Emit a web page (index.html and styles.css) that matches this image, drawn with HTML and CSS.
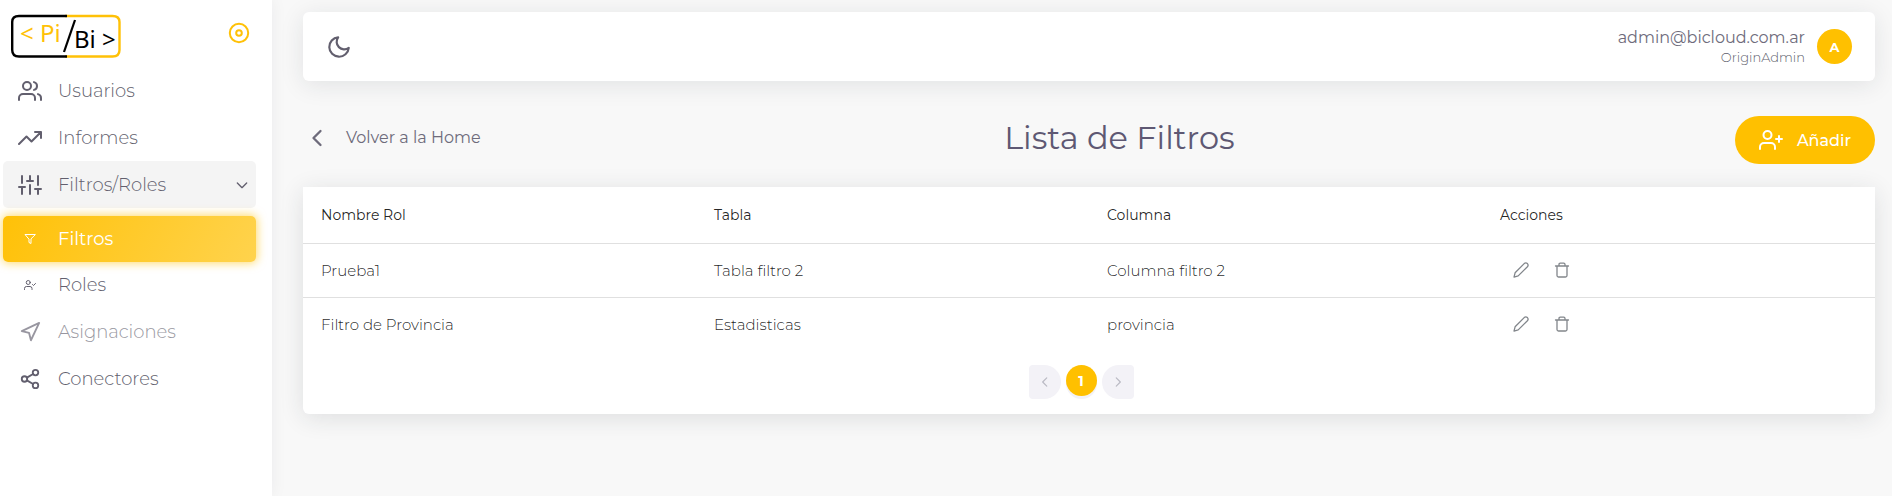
FILE: index.html
```html
<!DOCTYPE html>
<html lang="es">
<head>
<meta charset="utf-8">
<meta name="viewport" content="width=device-width, initial-scale=1">
<title>Lista de Filtros</title>
<link rel="stylesheet" href="styles.css">
</head>
<body>
<svg class="sprite" aria-hidden="true">
  <symbol id="pencil" viewBox="0 0 16 16"><path d="M11.200 1.600Q12.800.2 14.400 1.600 15.800 3.200 14.400 4.800L5.200 13.900 1 15.100 2.100 10.800Z"/></symbol>
  <symbol id="trash" viewBox="0 0 16 16"><path d="M1.500 4h13M3 4v9.500q0 1.500 1.500 1.500h7q1.500 0 1.500-1.500V4M5 4V2.500Q5 1.200 6.300 1.200h3.400Q11 1.200 11 2.500V4"/></symbol>
</svg>
<div class="app">
  <aside class="sidebar">
    <div class="brand">
      <a href="#" class="logo" aria-label="PiBi">
        <svg width="112" height="46" viewBox="0 0 112 46">
          <path class="frame gold" d="M55 2h47.500q7 0 7 6v28q0 6.500-7 6.500H55"/>
          <path class="frame" d="M57 2H9Q2.200 2 2.200 8v28q0 6.500 6.800 6.500h48"/>
          <path class="slash" d="M65 6 54 38"/>
          <text class="logo-text gold-text" x="10" y="28">&lt; Pi</text>
          <text class="logo-text" x="64" y="34">Bi &gt;</text>
        </svg>
      </a>
      <button class="pin" type="button" aria-label="Fijar menú"><svg class="icon" width="24" height="24" viewBox="0 0 24 24"><circle cx="12" cy="12" r="9.200"/><circle cx="12" cy="12" r="2.800"/></svg></button>
    </div>
    <nav class="menu">
      <a class="item" href="#"><svg class="icon" width="24" height="24" viewBox="0 0 24 24"><path d="M17 21v-2a4 4 0 0 0-4-4H5a4 4 0 0 0-4 4v2"/><circle cx="9" cy="7" r="4"/><path d="M23 21v-2a4 4 0 0 0-3-3.870M16 3.130a4 4 0 0 1 0 7.750"/></svg><span>Usuarios</span></a>
      <a class="item" href="#"><svg class="icon" width="24" height="24" viewBox="0 0 24 24"><path d="M23 6l-9.500 9.500-5-5L1 18M17 6h6v6"/></svg><span>Informes</span></a>
      <a class="item open" href="#"><svg class="icon" width="24" height="24" viewBox="0 0 24 24"><path d="M4 21v-7M4 10V3M12 21v-9M12 8V3M20 21v-5M20 12V3M1 14h6M9 8h6M17 16h6"/></svg><span>Filtros/Roles</span><svg class="icon chevron" width="16" height="16" viewBox="0 0 24 24"><path d="M5 9l7 7 7-7"/></svg></a>
      <div class="submenu">
        <a class="item sub active" href="#"><svg class="icon" width="12" height="12" viewBox="0 0 24 24"><path d="M22 3H2l8 9.460V19l4 2v-8.540z"/></svg><span>Filtros</span></a>
        <a class="item sub" href="#"><svg class="icon" width="12" height="12" viewBox="0 0 24 24"><path d="M16 21v-2a4 4 0 0 0-4-4H5a4 4 0 0 0-4 4v2"/><circle cx="8.500" cy="7" r="4"/><path d="M17 11l2 2 4-4"/></svg><span>Roles</span></a>
      </div>
      <a class="item muted" href="#"><svg class="icon" width="22" height="22" viewBox="0 0 24 24"><path d="M3 11l19-9-9 19-2-8z"/></svg><span>Asignaciones</span></a>
      <a class="item" href="#"><svg class="icon" width="22" height="22" viewBox="0 0 24 24"><circle cx="18" cy="5" r="3"/><circle cx="6" cy="12" r="3"/><circle cx="18" cy="19" r="3"/><path d="M8.590 13.510l6.830 3.980M15.410 6.510l-6.820 3.980"/></svg><span>Conectores</span></a>
    </nav>
  </aside>
  <main class="main">
    <header class="topbar">
      <button class="theme" type="button" aria-label="Modo oscuro"><svg class="icon" width="26" height="26" viewBox="0 0 24 24"><path d="M21 12.790A9 9 0 1 1 11.210 3 7 7 0 0 0 21 12.790z"/></svg></button>
      <div class="user">
        <div class="who"><span class="email">admin@bicloud.com.ar</span><span class="role">OriginAdmin</span></div>
        <span class="avatar">A</span>
      </div>
    </header>
    <div class="heading">
      <a class="back" href="#"><svg class="icon" width="28" height="28" viewBox="0 0 24 24"><path d="M15 18l-6-6 6-6"/></svg><span>Volver a la Home</span></a>
      <h1>Lista de Filtros</h1>
      <button class="add" type="button"><svg class="icon" width="24" height="24" viewBox="0 0 24 24"><path d="M16 21v-2a4 4 0 0 0-4-4H5a4 4 0 0 0-4 4v2"/><circle cx="8.500" cy="7" r="4"/><path d="M20 8v6M23 11h-6"/></svg><span>Añadir</span></button>
    </div>
    <section class="card">
      <table>
        <thead><tr><th>Nombre Rol</th><th>Tabla</th><th>Columna</th><th>Acciones</th></tr></thead>
        <tbody>
          <tr><td>Prueba1</td><td>Tabla filtro 2</td><td>Columna filtro 2</td><td><div class="actions"><button type="button" aria-label="Editar"><svg width="16" height="16"><use href="#pencil"/></svg></button><button type="button" aria-label="Eliminar"><svg width="16" height="16"><use href="#trash"/></svg></button></div></td></tr>
          <tr><td>Filtro de Provincia</td><td>Estadisticas</td><td>provincia</td><td><div class="actions"><button type="button" aria-label="Editar"><svg width="16" height="16"><use href="#pencil"/></svg></button><button type="button" aria-label="Eliminar"><svg width="16" height="16"><use href="#trash"/></svg></button></div></td></tr>
        </tbody>
      </table>
      <nav class="pager" aria-label="Paginación">
        <button class="step prev" type="button" aria-label="Anterior"><svg class="icon" width="14" height="14" viewBox="0 0 24 24"><path d="M15 19l-7-7 7-7"/></svg></button>
        <button class="page" type="button">1</button>
        <button class="step next" type="button" aria-label="Siguiente"><svg class="icon" width="14" height="14" viewBox="0 0 24 24"><path d="M9 19l7-7-7-7"/></svg></button>
      </nav>
    </section>
  </main>
</div>
</body>
</html>
```

FILE: styles.css
```css
* { box-sizing: border-box; }
body { margin: 0; background: #f8f8f8; color: #625f6e; font-family: Montserrat, Inter, sans-serif; font-size: 16px; }
a { color: inherit; text-decoration: none; }
button { padding: 0; border: 0; background: none; color: inherit; font: inherit; cursor: pointer; }
svg { display: block; flex: none; }
.sprite { position: absolute; width: 0; height: 0; }
.icon { fill: none; stroke: currentColor; stroke-width: 2; stroke-linecap: round; stroke-linejoin: round; }

.app { display: flex; min-height: 100vh; }
.sidebar { width: 272px; flex: none; background: #fff; box-shadow: 0 0 16px rgba(34, 41, 47, .06); }
.brand { display: flex; justify-content: space-between; align-items: flex-start; height: 67px; padding: 14px 21px 0 10px; }
.frame { fill: none; stroke: #000; stroke-width: 2.4; }
.frame.gold { stroke: #ffc107; }
.slash { stroke: #000; stroke-width: 2.2; }
.logo-text { font: 24px "Noto Sans", sans-serif; fill: #000; }
.gold-text { fill: #ffc107; }
.pin { margin-top: 7px; color: #ffc107; }

.item { display: flex; align-items: center; height: 47px; margin: 0 16px 0 3px; padding-left: 15px; border-radius: 5px; font-size: 18px; line-height: 22px; font-weight: 300; }
.item > .icon:first-child { width: 24px; }
.item > span { margin-left: 16px; }
.item.open { background: #f4f4f4; }
.item .chevron { margin: 0 6px 0 auto; }
.submenu { margin-top: 8px; }
.item.sub { height: 46px; }
.item.active { background: linear-gradient(118deg, #ffc107, #ffd34d); box-shadow: 0 0 10px 1px rgba(255, 193, 7, .6); color: #fff; font-weight: 400; }
.item.muted { opacity: .65; }

.main { flex: 1; min-width: 0; padding: 12px 17px 32px 31px; }
.topbar { display: flex; align-items: center; justify-content: space-between; height: 69px; padding: 0 23px; border-radius: 6px; background: #fff; box-shadow: 0 4px 24px rgba(34, 41, 47, .1); }
.user { display: flex; align-items: center; gap: 12px; }
.who { display: flex; flex-direction: column; align-items: flex-end; }
.email { font-size: 16px; line-height: 20px; color: #6e6b7b; }
.role { font-size: 13px; line-height: 18px; font-weight: 300; }
.avatar { display: grid; place-items: center; width: 35px; height: 35px; border-radius: 50%; background: #ffc000; color: #fff; font-size: 13px; font-weight: 700; }

.heading { display: grid; grid-template-columns: 201px 1fr auto; align-items: start; height: 48px; margin: 35px 0 23px; }
.back { display: flex; align-items: center; gap: 15px; height: 43px; color: #6e6b7b; font-size: 16px; white-space: nowrap; }
h1 { margin: 0; color: #5e5873; font-size: 32px; line-height: 43px; font-weight: 400; text-align: center; }
.add { display: flex; align-items: center; gap: 14px; height: 48px; padding: 0 24px; border-radius: 24px; background: #ffc000; color: #fff; font-size: 16px; font-weight: 500; }

.card { border-radius: 0 0 6px 6px; background: #fff; box-shadow: 0 4px 24px rgba(34, 41, 47, .12); }
table { width: 100%; table-layout: fixed; border-collapse: collapse; color: rgba(0, 0, 0, .87); }
th, td { padding: 0 18px; text-align: left; }
th { height: 56px; font-size: 14px; font-weight: 400; border-bottom: 1px solid #e0e0e0; }
td { height: 54px; font-size: 15px; font-weight: 300; }
tbody tr + tr td { border-top: 1px solid #e0e0e0; }
.actions { display: flex; gap: 25px; padding-left: 13px; }
.actions svg { fill: none; stroke: #82868b; stroke-width: 1.3; stroke-linejoin: round; stroke-linecap: round; }

.pager { display: flex; justify-content: center; gap: 5px; padding: 14px 0 15px; margin-right: 16px; }
.step, .page { display: grid; place-items: center; width: 32px; height: 34px; }
.step { background: #f3f2f7; color: #b9b9c3; }
.prev { border-radius: 4px 17px 17px 4px; }
.next { border-radius: 17px 4px 4px 17px; }
.page { height: 31px; width: 31px; border-radius: 50%; background: #ffc000; box-shadow: 0 3px 0 #f3f2f7; color: #fff; font-size: 14px; font-weight: 700; }
```
